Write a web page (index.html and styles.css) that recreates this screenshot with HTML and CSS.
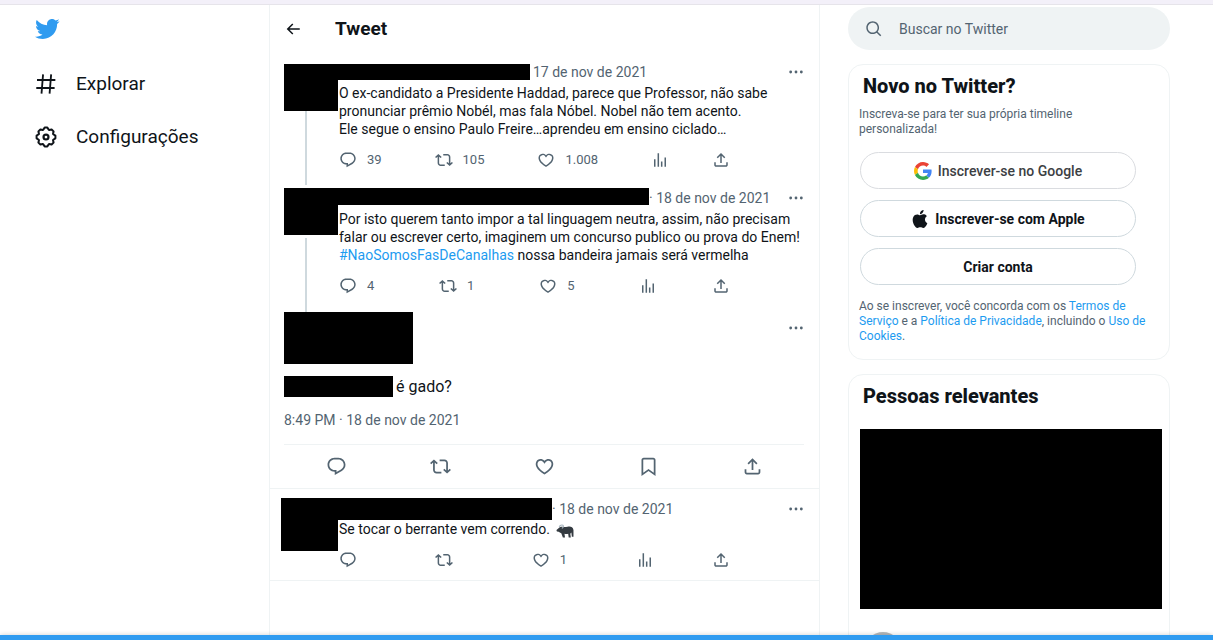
FILE: index.html
```html
<!DOCTYPE html>
<html lang="pt-BR">
<head>
<meta charset="utf-8">
<title>Tweet / Twitter</title>
<meta name="viewport" content="width=device-width, initial-scale=1">
<link rel="stylesheet" href="styles.css">
</head>
<body>
<svg class="sprite" aria-hidden="true">
  <symbol id="bird" viewBox="0 0 24 24"><path d="M23.643 4.937c-.835.37-1.732.62-2.675.733.962-.576 1.7-1.49 2.048-2.578-.9.534-1.897.922-2.958 1.13-.85-.904-2.06-1.47-3.4-1.47-2.572 0-4.658 2.086-4.658 4.66 0 .364.042.718.12 1.06-3.873-.195-7.304-2.05-9.602-4.868-.4.69-.63 1.49-.63 2.342 0 1.616.823 3.043 2.072 3.878-.764-.025-1.482-.234-2.11-.583v.06c0 2.257 1.605 4.14 3.737 4.568-.392.106-.803.162-1.227.162-.3 0-.593-.028-.877-.082.593 1.85 2.313 3.198 4.352 3.234-1.595 1.25-3.604 1.995-5.786 1.995-.376 0-.747-.022-1.112-.065 2.062 1.323 4.51 2.093 7.14 2.093 8.57 0 13.255-7.098 13.255-13.254 0-.2-.005-.402-.014-.602.91-.658 1.7-1.477 2.323-2.41z"/></symbol>
  <symbol id="hash" viewBox="0 0 24 24"><path fill="none" stroke="currentColor" stroke-width="2" d="M8.8 1.5 7.1 22.5M17.6 1.5 15.9 22.5M2.2 7.6h20M1.4 16.4h20"/></symbol>
  <symbol id="gear" viewBox="0 0 24 24"><path fill="none" stroke="currentColor" stroke-width="2.2" stroke-linejoin="round" d="M10.54 1.75h2.92l1.57 2.36c.11.17.32.25.53.21l2.53-.59 2.17 2.17-.58 2.54c-.05.2.04.41.21.53l2.36 1.57v2.92l-2.36 1.57c-.17.12-.26.33-.21.53l.58 2.54-2.17 2.17-2.53-.59c-.21-.04-.42.04-.53.21l-1.57 2.36h-2.92l-1.58-2.36c-.11-.17-.32-.25-.52-.21l-2.54.59-2.17-2.17.58-2.54c.05-.2-.03-.41-.21-.53l-2.35-1.57v-2.92L4.1 8.97c.18-.12.26-.33.21-.53L3.73 5.9 5.9 3.73l2.54.59c.2.04.41-.04.52-.21l1.58-2.36z"/><circle cx="12" cy="12" r="2.7" fill="none" stroke="currentColor" stroke-width="2.4"/></symbol>
  <symbol id="back" viewBox="0 0 24 24"><path d="M7.414 13l5.043 5.04-1.414 1.42L3.586 12l7.457-7.46 1.414 1.42L7.414 11H21v2H7.414z"/></symbol>
  <symbol id="more" viewBox="0 0 24 24"><circle cx="4" cy="12" r="2.1"/><circle cx="12" cy="12" r="2.1"/><circle cx="20" cy="12" r="2.1"/></symbol>
  <symbol id="reply" viewBox="0 0 24 24"><path d="M1.751 10c0-4.42 3.584-8 8.005-8h4.366c4.49 0 8.129 3.64 8.129 8.13 0 2.96-1.607 5.68-4.196 7.11l-8.054 4.46v-3.69h-.067c-4.49.1-8.183-3.51-8.183-8.01zm8.005-6c-3.317 0-6.005 2.69-6.005 6 0 3.37 2.77 6.08 6.138 6.01l.351-.01h1.761v2.3l5.087-2.81c1.951-1.08 3.163-3.13 3.163-5.36 0-3.39-2.744-6.13-6.129-6.13H9.756z"/></symbol>
  <symbol id="retweet" viewBox="0 0 24 24"><path d="M4.5 3.88l4.432 4.14-1.364 1.46L5.5 7.55V16c0 1.1.896 2 2 2H13v2H7.5c-2.209 0-4-1.79-4-4V7.55L1.432 9.48.068 8.02 4.5 3.88zM16.5 6H11V4h5.5c2.209 0 4 1.79 4 4v8.45l2.068-1.93 1.364 1.46-4.432 4.14-4.432-4.14 1.364-1.46 2.068 1.93V8c0-1.1-.896-2-2-2z"/></symbol>
  <symbol id="like" viewBox="0 0 24 24"><path d="M16.697 5.5c-1.222-.06-2.679.51-3.89 2.16l-.805 1.09-.806-1.09C9.984 6.01 8.526 5.44 7.304 5.5c-1.243.07-2.349.78-2.91 1.91-.552 1.12-.633 2.78.479 4.82 1.074 1.97 3.257 4.27 7.129 6.61 3.87-2.34 6.052-4.64 7.126-6.61 1.111-2.04 1.03-3.7.477-4.82-.561-1.13-1.666-1.84-2.908-1.91zm4.187 7.69c-1.351 2.48-4.001 5.12-8.379 7.67l-.503.3-.504-.3c-4.379-2.55-7.029-5.19-8.382-7.67-1.36-2.5-1.41-4.86-.514-6.67.887-1.79 2.647-2.91 4.601-3.01 1.651-.09 3.368.56 4.798 2.01 1.429-1.45 3.146-2.1 4.796-2.01 1.954.1 3.714 1.22 4.601 3.01.896 1.81.846 4.17-.514 6.67z"/></symbol>
  <symbol id="views" viewBox="0 0 24 24"><path d="M8.75 21V3h2v18h-2zM18 21V8.5h2V21h-2zM4 21l.004-10h2L6 21H4zm9.248 0v-7h2v7h-2z"/></symbol>
  <symbol id="share" viewBox="0 0 24 24"><path d="M12 2.59l5.7 5.7-1.41 1.42L13 6.41V16h-2V6.41l-3.3 3.3-1.41-1.42L12 2.59zM21 15l-.02 3.51c0 1.38-1.12 2.49-2.5 2.49H5.5C4.11 21 3 19.88 3 18.5V15h2v3.5c0 .28.22.5.5.5h12.98c.28 0 .5-.22.5-.5L19 15h2z"/></symbol>
  <symbol id="bookmark" viewBox="0 0 24 24"><path d="M4 4.5C4 3.12 5.119 2 6.5 2h11C18.881 2 20 3.12 20 4.5v18.44l-8-5.71-8 5.71V4.5zM6.5 4c-.276 0-.5.22-.5.5v14.56l6-4.29 6 4.29V4.5c0-.28-.224-.5-.5-.5h-11z"/></symbol>
  <symbol id="search" viewBox="0 0 24 24"><path d="M10.25 3.75c-3.59 0-6.5 2.91-6.5 6.5s2.91 6.5 6.5 6.5c1.795 0 3.419-.726 4.596-1.904 1.178-1.177 1.904-2.801 1.904-4.596 0-3.59-2.91-6.5-6.5-6.5zm-8.5 6.5c0-4.694 3.806-8.5 8.5-8.5s8.5 3.806 8.5 8.5c0 1.986-.682 3.815-1.824 5.262l4.781 4.781-1.414 1.414-4.781-4.781c-1.447 1.142-3.276 1.824-5.262 1.824-4.694 0-8.5-3.806-8.5-8.5z"/></symbol>
  <symbol id="google" viewBox="0 0 48 48"><path fill="#ea4335" d="M24 9.5c3.54 0 6.71 1.22 9.21 3.6l6.85-6.85C35.9 2.38 30.47 0 24 0 14.62 0 6.51 5.38 2.56 13.22l7.98 6.19C12.43 13.72 17.74 9.5 24 9.5z"/><path fill="#4285f4" d="M46.98 24.55c0-1.57-.15-3.09-.38-4.55H24v9.02h12.94c-.58 2.96-2.26 5.48-4.78 7.18l7.73 6c4.51-4.18 7.09-10.36 7.09-17.65z"/><path fill="#fbbc05" d="M10.53 28.59c-.48-1.45-.76-2.99-.76-4.59s.27-3.14.76-4.59l-7.98-6.19C.92 16.46 0 20.12 0 24c0 3.88.92 7.54 2.56 10.78l7.97-6.19z"/><path fill="#34a853" d="M24 48c6.48 0 11.93-2.13 15.89-5.81l-7.73-6c-2.15 1.45-4.92 2.3-8.16 2.3-6.26 0-11.57-4.22-13.47-9.91l-7.98 6.19C6.51 42.62 14.62 48 24 48z"/></symbol>
  <symbol id="apple" viewBox="0 0 24 24"><path d="M12.152 6.896c-.948 0-2.415-1.078-3.96-1.04-2.04.027-3.91 1.183-4.961 3.014-2.117 3.675-.546 9.103 1.519 12.09 1.013 1.454 2.208 3.09 3.792 3.039 1.52-.065 2.09-.987 3.935-.987 1.831 0 2.35.987 3.96.948 1.637-.026 2.676-1.48 3.676-2.948 1.156-1.688 1.636-3.325 1.662-3.415-.039-.013-3.182-1.221-3.22-4.857-.026-3.04 2.48-4.494 2.597-4.559-1.429-2.09-3.623-2.324-4.39-2.376-2-.156-3.675 1.09-4.61 1.09zM15.53 3.83c.843-1.012 1.4-2.427 1.245-3.83-1.207.052-2.662.805-3.532 1.818-.78.896-1.454 2.338-1.273 3.714 1.338.104 2.715-.688 3.559-1.701"/></symbol>
  <symbol id="buffalo" viewBox="0 0 34 28"><path fill="#343b41" d="M1 13c2-1 4-4 8-6 5-1 9 1 13 0 5-1 10 0 11 6v13h-3l-1-8-2 2 1 7h-4l-1-7c-2 1-5 1-7 0l1 7h-4l-3-8c-3-1-4-2-6-3-2 1-3-1-3-3z"/><path fill="none" stroke="#a6b5bf" stroke-width="2" d="M6 7c1-3 5-4 7-3 2 2 1 4-2 6"/></symbol>
</svg>

<div class="page">
  <div class="topline"></div>
  <div class="columns">
    <nav class="nav" aria-label="Principal">
      <a class="logo" href="#" aria-label="Twitter"><svg class="icon"><use href="#bird"/></svg></a>
      <a class="nav-link" href="#"><svg class="icon"><use href="#hash"/></svg>Explorar</a>
      <a class="nav-link" href="#"><svg class="icon"><use href="#gear"/></svg>Configurações</a>
    </nav>

    <main class="feed">
      <header class="feed-head">
        <button class="plain" aria-label="Voltar"><svg class="icon"><use href="#back"/></svg></button>
        <h1>Tweet</h1>
      </header>

      <article class="tweet first">
        <div class="rail"><div class="avatar"></div><div class="thread"></div></div>
        <div class="body">
          <div class="meta"><span class="name name-a"></span><time>17 de nov de 2021</time><button class="plain more" aria-label="Mais"><svg class="icon"><use href="#more"/></svg></button></div>
          <p class="text">O ex-candidato a Presidente Haddad, parece que Professor, não sabe<br>pronunciar prêmio Nobél, mas fala Nóbel. Nobel não tem acento.<br>Ele segue o ensino Paulo Freire…aprendeu em ensino ciclado…</p>
          <div class="actions">
            <button class="plain" aria-label="Responder"><svg class="icon"><use href="#reply"/></svg><span class="count">39</span></button>
            <button class="plain" aria-label="Retweetar"><svg class="icon"><use href="#retweet"/></svg><span class="count">105</span></button>
            <button class="plain" aria-label="Curtir"><svg class="icon"><use href="#like"/></svg><span class="count">1.008</span></button>
            <button class="plain" aria-label="Visualizações"><svg class="icon"><use href="#views"/></svg></button>
            <button class="plain" aria-label="Compartilhar"><svg class="icon"><use href="#share"/></svg></button>
          </div>
        </div>
      </article>

      <article class="tweet second">
        <div class="rail"><div class="avatar"></div><div class="thread"></div></div>
        <div class="body">
          <div class="meta"><span class="name name-b"></span><time>· 18 de nov de 2021</time><button class="plain more" aria-label="Mais"><svg class="icon"><use href="#more"/></svg></button></div>
          <p class="text">Por isto querem tanto impor a tal linguagem neutra, assim, não precisam<br>falar ou escrever certo, imaginem um concurso publico ou prova do Enem!<br><a href="#">#NaoSomosFasDeCanalhas</a> nossa bandeira jamais será vermelha</p>
          <div class="actions">
            <button class="plain" aria-label="Responder"><svg class="icon"><use href="#reply"/></svg><span class="count">4</span></button>
            <button class="plain" aria-label="Retweetar"><svg class="icon"><use href="#retweet"/></svg><span class="count">1</span></button>
            <button class="plain" aria-label="Curtir"><svg class="icon"><use href="#like"/></svg><span class="count">5</span></button>
            <button class="plain" aria-label="Visualizações"><svg class="icon"><use href="#views"/></svg></button>
            <button class="plain" aria-label="Compartilhar"><svg class="icon"><use href="#share"/></svg></button>
          </div>
        </div>
      </article>

      <article class="focal">
        <div class="focal-head"><div class="author"></div><button class="plain more" aria-label="Mais"><svg class="icon"><use href="#more"/></svg></button></div>
        <p class="focal-text"><span class="mention"></span>é gado?</p>
        <time class="stamp">8:49 PM · 18 de nov de 2021</time>
        <div class="focal-actions">
          <button class="plain" aria-label="Responder"><svg class="icon"><use href="#reply"/></svg></button>
          <button class="plain" aria-label="Retweetar"><svg class="icon"><use href="#retweet"/></svg></button>
          <button class="plain" aria-label="Curtir"><svg class="icon"><use href="#like"/></svg></button>
          <button class="plain" aria-label="Salvar"><svg class="icon"><use href="#bookmark"/></svg></button>
          <button class="plain" aria-label="Compartilhar"><svg class="icon"><use href="#share"/></svg></button>
        </div>
      </article>

      <article class="tweet reply">
        <div class="rail"><div class="avatar"></div></div>
        <div class="body">
          <div class="meta"><span class="name name-c"></span><time>· 18 de nov de 2021</time><button class="plain more" aria-label="Mais"><svg class="icon"><use href="#more"/></svg></button></div>
          <p class="text">Se tocar o berrante vem correndo. <svg class="emoji" role="img" aria-label="Búfalo"><use href="#buffalo"/></svg></p>
          <div class="actions">
            <button class="plain" aria-label="Responder"><svg class="icon"><use href="#reply"/></svg><span class="count"></span></button>
            <button class="plain" aria-label="Retweetar"><svg class="icon"><use href="#retweet"/></svg><span class="count"></span></button>
            <button class="plain" aria-label="Curtir"><svg class="icon"><use href="#like"/></svg><span class="count">1</span></button>
            <button class="plain" aria-label="Visualizações"><svg class="icon"><use href="#views"/></svg></button>
            <button class="plain" aria-label="Compartilhar"><svg class="icon"><use href="#share"/></svg></button>
          </div>
        </div>
      </article>
    </main>

    <aside class="side">
      <label class="search"><svg class="icon"><use href="#search"/></svg><input type="search" placeholder="Buscar no Twitter" aria-label="Buscar no Twitter"></label>
      <section class="card">
        <h2>Novo no Twitter?</h2>
        <p class="small">Inscreva-se para ter sua própria timeline<br>personalizada!</p>
        <div class="signup">
          <button class="pill google"><svg class="icon"><use href="#google"/></svg>Inscrever-se no Google</button>
          <button class="pill"><svg class="icon"><use href="#apple"/></svg>Inscrever-se com Apple</button>
          <button class="pill">Criar conta</button>
        </div>
        <p class="small">Ao se inscrever, você concorda com os <a href="#">Termos de<br>Serviço</a> e a <a href="#">Política de Privacidade</a>, incluindo o <a href="#">Uso de<br>Cookies</a>.</p>
      </section>
      <section class="card people">
        <h2>Pessoas relevantes</h2>
        <div class="people-block"></div>
        <div class="person"></div>
      </section>
    </aside>
  </div>
  <div class="bottombar"></div>
</div>
</body>
</html>
```
FILE: styles.css
```css
* { box-sizing: border-box; }

body {
  margin: 0;
  background: #fff;
  color: #0f1419;
  font-family: Roboto, "Liberation Sans", sans-serif;
  font-size: 14px;
  line-height: 18px;
}

h1, h2, p { margin: 0; }
a { color: #1d9bf0; text-decoration: none; }
.sprite { display: none; }
.icon { display: block; flex: none; width: 18px; height: 18px; fill: currentColor; }

.plain {
  display: flex;
  align-items: center;
  padding: 0;
  border: 0;
  background: none;
  color: #536471;
  font: inherit;
}

.page { display: flex; flex-direction: column; height: 100vh; overflow: hidden; }
.topline { flex: none; height: 5px; background: #f3f0f9; border-bottom: 1px solid #e6e4ea; }
.bottombar { flex: none; height: 5px; background: #2f9bf0; box-shadow: 0 0 5px rgba(0, 0, 0, 0.2); z-index: 1; }

.columns {
  flex: 1;
  min-height: 0;
  display: grid;
  grid-template-columns: 269fr 551fr 393fr;
}

/* Left navigation */
.nav { padding: 11px 34px; }
.logo { display: block; margin-bottom: 15px; }
.logo .icon { width: 26px; height: 26px; fill: #2f9bf0; }
.nav-link {
  display: flex;
  align-items: center;
  gap: 19px;
  height: 53px;
  padding-left: 1px;
  color: #0f1419;
  font-size: 19px;
}
.nav-link .icon { width: 22px; height: 22px; }

/* Timeline */
.feed { border: solid #eff3f4; border-width: 0 1px; }
.feed-head { display: flex; align-items: center; gap: 33px; height: 47px; padding: 0 14px; margin-bottom: 10px; }
.feed-head .icon { color: #0f1419; }
.feed-head h1 { font-size: 19px; font-weight: 700; }

.tweet { display: flex; padding: 0 15px 0 14px; }
.rail { display: flex; flex-direction: column; flex: none; width: 54px; }
.avatar { flex: none; height: 47px; background: #000; }
.thread { flex: 1; width: 2px; margin: 0 0 3px 21px; background: #cfd9de; }
.body { flex: 1; min-width: 0; }
.meta { display: flex; align-items: center; height: 20px; margin-bottom: 2px; color: #536471; }
.name { flex: none; background: #000; }
.name-a { width: 192px; height: 16px; margin-right: 3px; }
.name-b { width: 311px; height: 17px; align-self: flex-start; }
.name-c { width: 214px; height: 22px; }
.more { margin-left: auto; }
.more .icon { width: 16px; height: 16px; }
.text { padding-left: 1px; }
.emoji { display: inline-block; width: 18px; height: 15px; margin-left: 3px; vertical-align: -4px; }

.actions { display: flex; justify-content: space-between; height: 20px; margin: 12px 74px 18px 1px; }
.count { min-width: 20px; padding: 0 10px; font-size: 13px; }

.first .rail { padding-top: 2px; }
.second .thread { margin-top: 3px; margin-bottom: 0; }
.second .actions { margin-bottom: 16px; }

.focal { padding: 0 15px 0 14px; }
.focal-head { display: flex; align-items: flex-start; margin-bottom: 12px; }
.author { width: 129px; height: 52px; background: #000; }
.focal-head .more { height: 32px; }
.focal-text { display: flex; align-items: center; height: 21px; font-size: 16px; }
.mention { width: 109px; height: 21px; margin-right: 3px; background: #000; }
.stamp { display: block; margin: 14px 0 15px; color: #536471; }
.focal-actions {
  display: grid;
  grid-template-columns: repeat(5, 1fr);
  justify-items: center;
  height: 44px;
  border-top: 1px solid #eff3f4;
}
.focal-actions .icon { width: 21px; height: 21px; }

.reply { padding-top: 9px; border: solid #eff3f4; border-width: 1px 0; }
.reply .rail { width: 57px; margin-left: -3px; }
.reply .avatar { height: 53px; }
.reply .meta { height: 22px; margin-bottom: 0; }
.reply .actions { margin-bottom: 10px; }

/* Right column */
.side { padding: 2px 43px 0 28px; min-height: 0; }
.search { display: flex; align-items: center; gap: 16px; height: 43px; padding: 0 17px; border-radius: 22px; background: #eff3f4; color: #536471; }
.search input { flex: 1; min-width: 0; padding: 0; border: 0; outline: 0; background: none; color: #0f1419; font: inherit; }
.search input::placeholder { color: #536471; opacity: 1; }

.card { margin-top: 14px; padding: 11px 10px 15px; border: 1px solid #eff3f4; border-radius: 15px; }
.card h2 { margin: 0 4px 10px; font-size: 20px; line-height: 21px; font-weight: 800; }
.small { color: #536471; font-size: 12px; line-height: 15px; }
.signup { display: flex; flex-direction: column; gap: 11px; margin: 15px 23px 14px 1px; }
.pill {
  display: flex;
  align-items: center;
  justify-content: center;
  gap: 6px;
  height: 37px;
  border: 1px solid #cfd9de;
  border-radius: 19px;
  background: #fff;
  color: #0f1419;
  font: inherit;
  font-weight: 700;
}
.google { border-color: #dadce0; color: #3c4043; font-weight: 500; }

.people-block { height: 180px; margin: 0 -3px 23px 1px; background: #000; }
.people h2 { margin-bottom: 22px; }
.person { width: 38px; height: 38px; margin-left: 5px; border-radius: 50%; background: #b4b8ba; }
```
